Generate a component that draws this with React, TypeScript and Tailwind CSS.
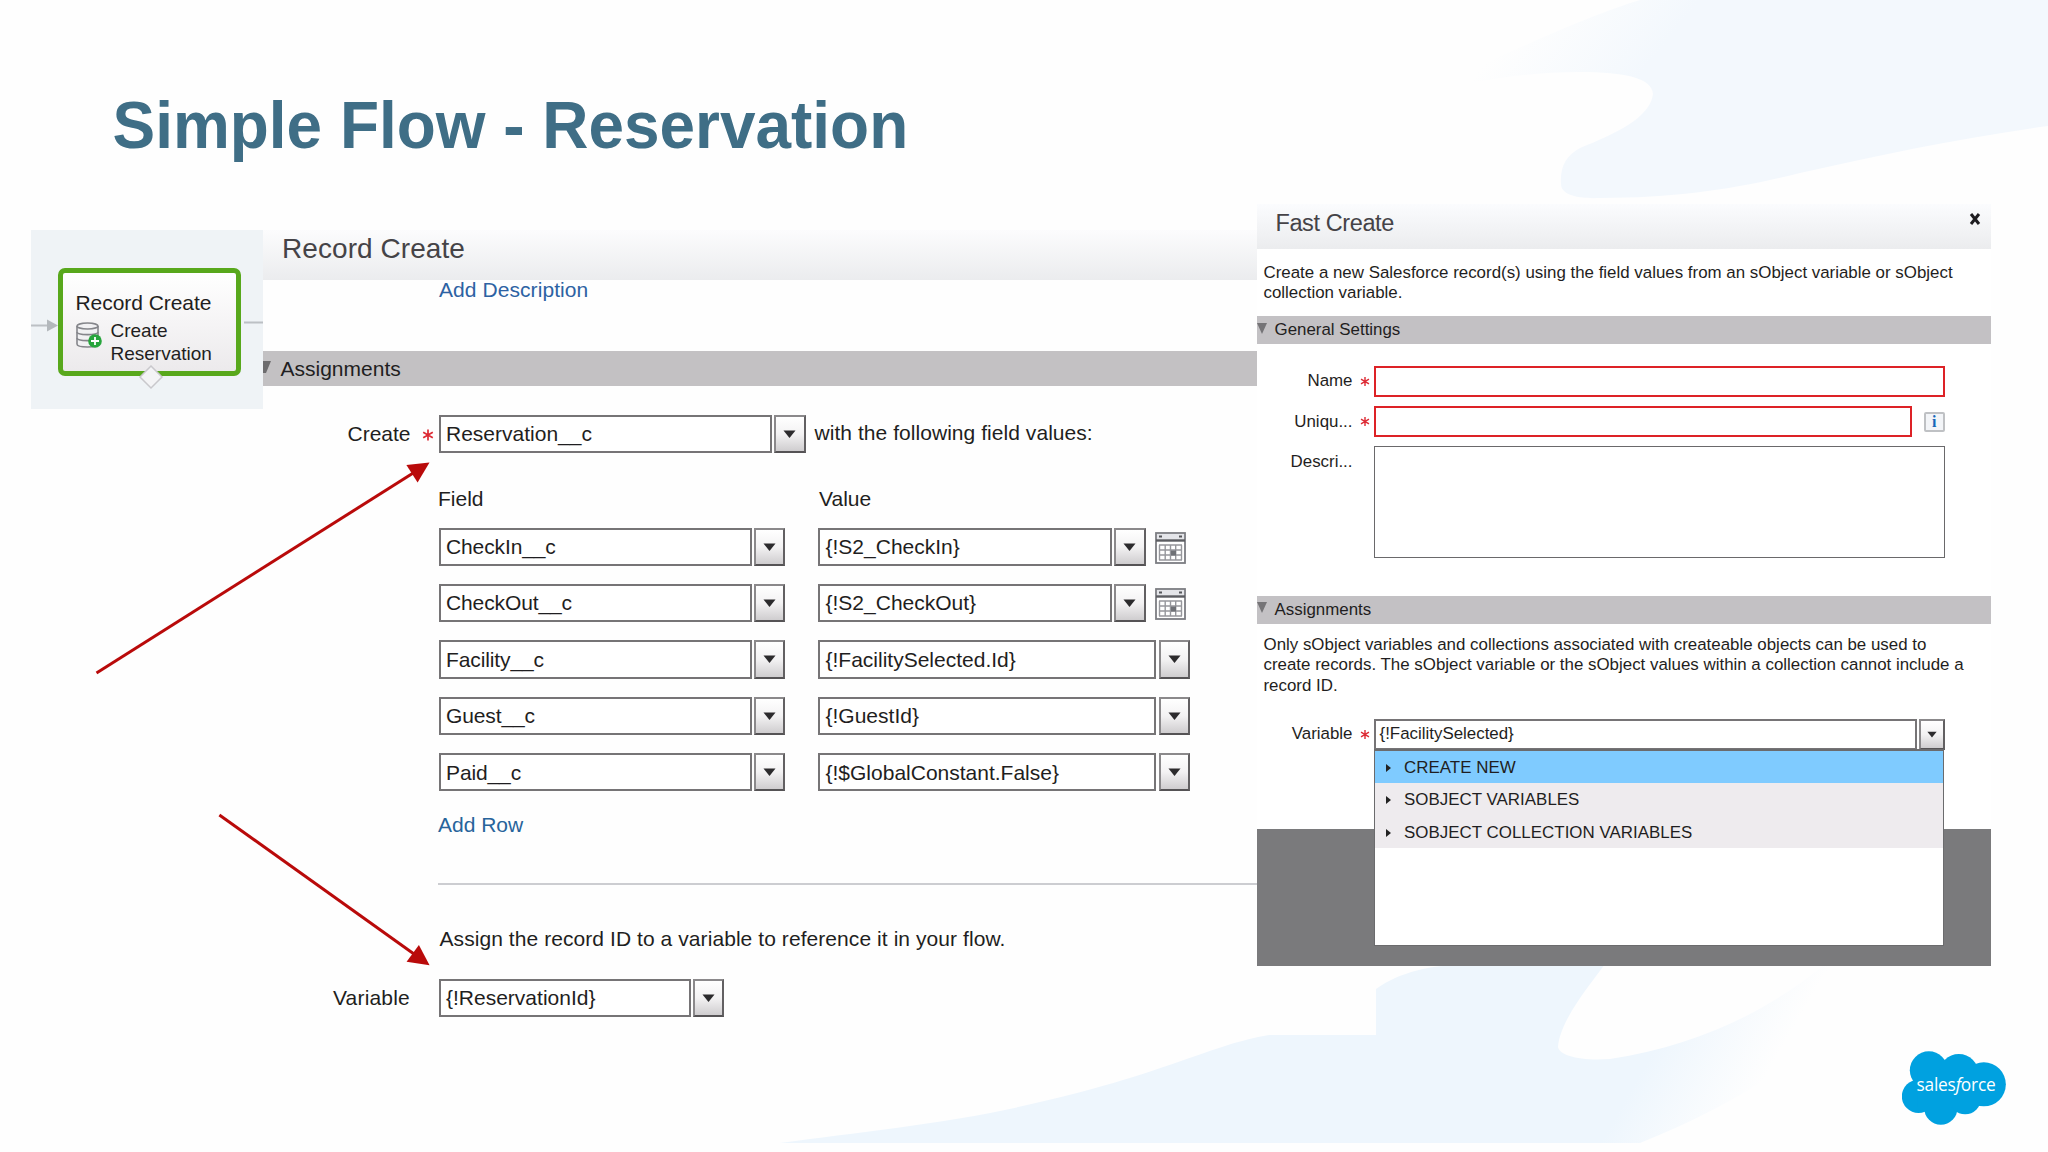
import React from "react";

function Star({ className = "" }: { className?: string }) {
  return (
    <svg viewBox="0 0 12 12" className={className} stroke="#dd2a34" strokeWidth="1.7" fill="none">
      <path d="M6 0.5V11.5M1.2 3.2L10.8 8.8M10.8 3.2L1.2 8.8" />
    </svg>
  );
}

function Combo({
  value,
  field,
  button = "w-[31px]",
  gap = "gap-[2px]",
  height = "h-[38.4px]",
  text = "pl-[5.5px] text-[21px]",
  arrow = "h-[8px] w-[13px]",
}: {
  value: string;
  field: string;
  button?: string;
  gap?: string;
  height?: string;
  text?: string;
  arrow?: string;
}) {
  return (
    <div className={`flex shrink-0 ${gap} ${height}`}>
      <div className={`flex items-center whitespace-nowrap border-2 border-[#767476] bg-white ${field} ${text}`}>
        {value}
      </div>
      <div
        className={`flex items-center justify-center border-2 border-t-[#8b898b] border-l-[#8b898b] border-r-[#626062] border-b-[#555355] bg-linear-to-b from-white via-[#f3f2f3] to-[#cfcdcf] ${button}`}
      >
        <svg viewBox="0 0 13 8" className={arrow}>
          <path d="M0.5 0.5H12.5L6.5 8Z" fill="#2c2b2d" />
        </svg>
      </div>
    </div>
  );
}

function CalendarIcon() {
  return (
    <svg viewBox="0 0 31 32" className="mt-[2px] ml-[9px] h-[32px] w-[31px]">
      <rect x="1" y="1" width="29" height="30" fill="#fff" stroke="#7c7d82" strokeWidth="1.8" />
      <rect x="2" y="2" width="27" height="6" fill="#e4e5e9" />
      <path d="M1 8.5H30" stroke="#5c5d62" strokeWidth="2.4" />
      <path d="M4 4.5H7M24 4.5H27" stroke="#55565a" strokeWidth="2" />
      <path d="M4 13H27M4 18H27M4 23H27M4 28H27M4.5 13V28M10.2 13V28M15.5 13V28M20.7 13V28M26.5 13V28" stroke="#96979c" strokeWidth="1.4" />
      <rect x="16" y="18.5" width="5" height="5" fill="#6f7176" />
    </svg>
  );
}

function Background() {
  return (
    <svg viewBox="0 0 2048 1152" className="absolute inset-0 h-full w-full">
      <defs>
        <linearGradient id="sky" gradientUnits="userSpaceOnUse" x1="1520" y1="20" x2="1620" y2="100">
          <stop offset="0" stopColor="#f3f8fd" stopOpacity="0" />
          <stop offset="1" stopColor="#f3f8fd" />
        </linearGradient>
        <linearGradient id="wave" gradientUnits="userSpaceOnUse" x1="1660" y1="1040" x2="1755" y2="1095">
          <stop offset="0" stopColor="#eef6fd" />
          <stop offset="1" stopColor="#eef6fd" stopOpacity="0" />
        </linearGradient>
      </defs>
      <path
        d="M1420 95C1500 55 1590 15 1640 0H2048V126C1960 138 1880 155 1800 173C1740 188 1680 198 1600 198C1575 199 1561 194 1561 184C1560 168 1565 156 1580 148C1615 134 1650 118 1653 94C1652 78 1625 72 1580 72C1520 72 1470 82 1420 95Z"
        fill="url(#sky)"
      />
      <path
        d="M780 1143C860 1132 960 1122 1040 1102C1170 1072 1210 1045 1269 1035H1376V989C1400 972 1430 965 1470 964H1605C1590 985 1560 1020 1558 1047C1560 1056 1580 1061 1610 1059C1700 1045 1770 1010 1825 964H1900C1850 1030 1750 1100 1640 1143Z"
        fill="url(#wave)"
      />
    </svg>
  );
}

function FlowNode() {
  return (
    <div className="relative mt-[26px] ml-[31px] h-[179px] w-[232px] shrink-0 bg-[#eff3f6] pt-[38px] pl-[27px]">
      <div className="h-[108px] w-[183px] rounded-[7px] border-[5px] border-[#58a81c] bg-linear-to-b from-white to-[#eceaec] pt-[16px] pl-[12.5px]">
        <div className="text-[21px] leading-[28px] tracking-[-0.05px] whitespace-nowrap">Record Create</div>
        <div className="flex gap-[9px]">
          <svg viewBox="0 0 26 27" className="mt-[5px] h-[27px] w-[26px] shrink-0">
            <g fill="#f1f1f3" stroke="#85868b" strokeWidth="1.6">
              <path d="M1 4V22C1 26 22 26 22 22V4" />
              <ellipse cx="11.5" cy="4" rx="10.5" ry="3" />
              <path d="M1 10C1 13.5 22 13.5 22 10M1 16C1 19.5 22 19.5 22 16" fill="none" />
            </g>
            <circle cx="19" cy="19" r="6.8" fill="#27a53c" />
            <path d="M19 15V23M15 19H23" stroke="#fff" strokeWidth="1.8" />
          </svg>
          <div className="pt-[3px] text-[19px] leading-[22.5px]">
            <div>Create</div>
            <div>Reservation</div>
          </div>
        </div>
      </div>
      <svg viewBox="0 0 232 179" className="absolute inset-0 h-full w-full">
        <path d="M0 95.5H17M213 92.5H232" stroke="#bcc0c4" strokeWidth="2" />
        <path d="M16 89.5L27 95.5L16 101.5Z" fill="#b3b8bc" />
        <path d="M120 136L131 147L120 158L109 147Z" fill="#f4f4f6" stroke="#c9c8cc" strokeWidth="1.5" />
      </svg>
    </div>
  );
}

const rows = [
  { field: "CheckIn__c", value: "{!S2_CheckIn}", date: true },
  { field: "CheckOut__c", value: "{!S2_CheckOut}", date: true },
  { field: "Facility__c", value: "{!FacilitySelected.Id}", date: false },
  { field: "Guest__c", value: "{!GuestId}", date: false },
  { field: "Paid__c", value: "{!$GlobalConstant.False}", date: false },
];

function RecordCreate() {
  return (
    <section className="mt-[26px] w-[993.5px] shrink-0 text-[21px] whitespace-nowrap">
      <header className="h-[50px] bg-linear-to-b from-[#fcfcfd] to-[#ebecee] pl-[19px] text-[28px] leading-[37px] tracking-[0.07px] text-[#454347]">
        Record Create
      </header>
      <div className="h-[71px] pl-[176px] leading-[20px] tracking-[0.07px] text-[#2d62a3]">Add Description</div>
      <div className="flex h-[35px] items-center bg-[#c3c1c3]">
        <svg viewBox="0 0 8 12" className="h-[12px] w-[8px] -translate-y-[2px]">
          <path d="M0 0H8L3 12H0Z" fill="#6d6c6e" />
        </svg>
        <span className="ml-[9.5px]">Assignments</span>
      </div>

      <div className="mt-[29px] flex items-center">
        <span className="w-[147.5px] text-right">Create</span>
        <Star className="mt-[2px] ml-[11px] h-[12px] w-[12px]" />
        <div className="ml-[5px]">
          <Combo value="Reservation__c" field="w-[333px]" button="w-[32px]" height="h-[38px]" />
        </div>
        <span className="ml-[9px] pb-[3px] tracking-[0.05px]">with the following field values:</span>
      </div>

      <div className="mt-[33px] ml-[175px] flex h-[26px] leading-[26px]">
        <span className="w-[381px]">Field</span>
        <span>Value</span>
      </div>
      <div className="mt-[15.5px] ml-[175.5px] flex flex-col gap-[18px]">
        {rows.map((r) => (
          <div key={r.field} className="flex h-[38.4px] items-center">
            <Combo value={r.field} field="w-[313px] tracking-[-0.12px]" />
            <div className="ml-[33.5px] flex items-center">
              {r.date ? (
                <Combo value={r.value} field="w-[293.5px]" button="w-[32px]" />
              ) : (
                <Combo value={r.value} field="w-[338px]" gap="gap-[3px]" />
              )}
              {r.date && <CalendarIcon />}
            </div>
          </div>
        ))}
      </div>
      <div className="mt-[21.5px] ml-[175px] h-[24px] leading-[24px] text-[#27649b]">Add Row</div>
      <div className="mt-[46px] ml-[175px] h-[2.5px] bg-[#cccdd1]" />
      <div className="mt-[42px] ml-[176.5px] h-[24px] leading-[24px] tracking-[0.07px]">
        Assign the record ID to a variable to reference it in your flow.
      </div>
      <div className="mt-[27.5px] flex items-center">
        <span className="w-[147px] text-right tracking-[0.2px]">Variable</span>
        <div className="ml-[28.5px]">
          <Combo value="{!ReservationId}" field="w-[252px]" height="h-[38px]" />
        </div>
      </div>
    </section>
  );
}

function SectionBar({ title, className }: { title: string; className: string }) {
  return (
    <div className={`flex h-[28px] items-center bg-[#c3c1c4] ${className}`}>
      <svg viewBox="0 0 10 11" className="ml-[0.5px] h-[11px] w-[10px] -translate-y-[2px]">
        <path d="M0 0H10L5 11Z" fill="#757477" />
      </svg>
      <span className="ml-[7.5px]">{title}</span>
    </div>
  );
}

const options = ["CREATE NEW", "SOBJECT VARIABLES", "SOBJECT COLLECTION VARIABLES"];

function FastCreate() {
  return (
    <section className="relative h-[761px] w-[734.5px] shrink-0 bg-linear-to-b from-white/0 from-[40px] to-white to-[45px] text-[16.9px] whitespace-nowrap">
      <header className="flex h-[45px] justify-between bg-linear-to-b from-[#fbfcfe] to-[#ebecee] pr-[10px] pl-[19px]">
        <span className="text-[23.5px] leading-[39px] tracking-[-0.4px] text-[#454347]">Fast Create</span>
        <svg viewBox="0 0 12 12" className="mt-[9px] h-[12px] w-[12px]">
          <path d="M2 1L10 11M10 1L2 11" stroke="#1e1d20" strokeWidth="3" />
        </svg>
      </header>
      <p className="pt-[14px] pl-[7px] leading-[20px]">
        Create a new Salesforce record(s) using the field values from an sObject variable or sObject
        <br />
        collection variable.
      </p>
      <SectionBar title="General Settings" className="mt-[13px]" />

      <div className="mt-[22px] flex h-[31px] items-center">
        <span className="w-[96px] pb-[1px] text-right">Name</span>
        <Star className="ml-[7.5px] h-[11px] w-[10px]" />
        <div className="ml-[4px] h-[31px] w-[570.5px] border-2 border-[#dd2226] bg-white" />
      </div>
      <div className="mt-[9px] flex h-[31px] items-center">
        <span className="w-[96px] text-right">Uniqu...</span>
        <Star className="ml-[7.5px] h-[11px] w-[10px]" />
        <div className="ml-[4px] h-[31px] w-[538px] border-2 border-[#dd2226] bg-white" />
        <div className="ml-[12px] flex h-[20px] w-[20.5px] items-center justify-center rounded-[2px] border-2 border-[#bfc1c4] bg-[#f3f5f8] font-['Liberation_Serif'] text-[16px] leading-none font-bold text-[#1767b8]">
          i
        </div>
      </div>
      <div className="mt-[9px] flex h-[112px]">
        <span className="w-[96px] pt-[6px] text-right leading-[20px]">Descri...</span>
        <div className="ml-[21.5px] w-[570.5px] border border-[#6a696b] bg-white" />
      </div>

      <SectionBar title="Assignments" className="mt-[37.5px]" />
      <p className="h-[72px] pt-[11.5px] pl-[7px] leading-[20.4px]">
        Only sObject variables and collections associated with createable objects can be used to
        <br />
        create records. The sObject variable or the sObject values within a collection cannot include a
        <br />
        record ID.
      </p>

      <div className="mt-[23px] flex h-[31px] items-center">
        <span className="w-[96px] text-right">Variable</span>
        <Star className="ml-[7.5px] h-[11px] w-[10px]" />
        <div className="ml-[4px]">
          <Combo
            value="{!FacilitySelected}"
            field="w-[543px]"
            button="w-[25.5px]"
            height="h-[31px]"
            text="pl-[3.5px] text-[16.9px]"
            arrow="h-[7px] w-[10px]"
          />
        </div>
      </div>
      <div className="mt-[79px] h-[137px] bg-[#7a7a7c]" />

      <ul className="absolute top-[544.5px] left-[117.5px] h-[197.5px] w-[570px] border border-t-2 border-[#6b6b6d] bg-white">
        {options.map((o, i) => (
          <li
            key={o}
            className={`flex h-[32.6px] items-center pt-px pl-[11px] ${i === 0 ? "bg-[#7fcbff]" : "bg-[#eeebee]"}`}
          >
            <svg viewBox="0 0 5 8" className="mt-[1px] h-[8px] w-[5px]">
              <path d="M0 0L5 4L0 8Z" fill="#222" />
            </svg>
            <span className="ml-[13px] tracking-[0.03px]">{o}</span>
          </li>
        ))}
      </ul>
    </section>
  );
}

function Arrows() {
  return (
    <svg viewBox="0 0 2048 1152" className="absolute inset-0 h-full w-full">
      <g stroke="#b90a0a" strokeWidth="3" fill="#b90a0a">
        <path d="M96.5 673L414 472.5" />
        <path d="M219.4 815L414 954" />
      </g>
      <g fill="#b90a0a">
        <path d="M429.5 462.5L417.6 482.5L406.4 464.9Z" />
        <path d="M429.6 965.3L418.9 945L406.6 961.7Z" />
      </g>
    </svg>
  );
}

function Logo() {
  return (
    <div className="absolute top-[1050.5px] left-[1902px] flex h-[74px] w-[104px] items-center justify-center">
      <svg viewBox="163 62 311 222" className="absolute inset-0 h-full w-full" fill="#00a1e0">
        <circle cx="243" cy="120" r="57" />
        <circle cx="333" cy="130" r="59" />
        <circle cx="408" cy="162" r="66" />
        <circle cx="212" cy="198" r="50" />
        <circle cx="279" cy="233" r="50" />
        <circle cx="352" cy="205" r="47" />
        <rect x="210" y="120" width="170" height="110" />
      </svg>
      <span className="relative -top-[3px] left-[2px] font-['Open_Sans'] text-[17.3px] leading-none font-medium tracking-[-0.2px] whitespace-nowrap text-white">
        sales<i>f</i>orce
      </span>
    </div>
  );
}

export default function App() {
  return (
    <main className="relative h-[1152px] w-[2048px] overflow-hidden bg-[#fefefe] font-['Liberation_Sans',sans-serif] text-[#1f1e21]">
      <Background />
      <div className="relative">
        <h1 className="h-[204px] origin-left scale-x-[0.954] pt-[85px] pl-[118px] text-[67px] leading-[80px] font-bold whitespace-nowrap text-[#3f6e86]">
          Simple Flow - Reservation
        </h1>
        <div className="flex items-start">
          <FlowNode />
          <RecordCreate />
          <FastCreate />
        </div>
      </div>
      <Arrows />
      <Logo />
    </main>
  );
}
